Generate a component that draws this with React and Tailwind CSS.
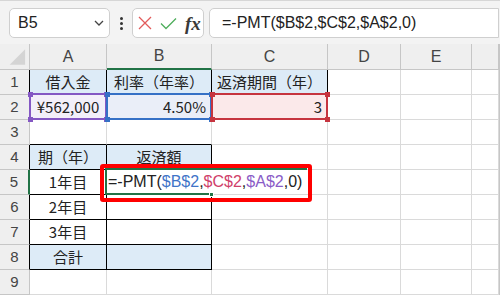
import React from "react";

const font = "font-['Noto_Sans_CJK_JP','Noto_Sans',sans-serif]";
const latin = "font-['Liberation_Sans','Noto_Sans_CJK_JP',sans-serif]";

const colHead = `flex items-center justify-center border-r border-b border-[#c6c6c6] bg-[#efefef] text-[16px] text-[#444] ${latin}`;
const rowHead = `flex items-center justify-center border-r border-b bg-[#efefef] border-b-[#c6c6c6] text-[15px] text-[#444] ${latin}`;
const cell = `relative flex items-center border-r border-b border-[#dadada] px-[5px] text-[15px] text-[#222] whitespace-nowrap ${font}`;

const RangeBox = ({ color, bg }) => (
  <>
    <div className={`absolute z-10 -left-[1px] -top-[2px] -right-[1px] -bottom-[1px] border-2 ${color}`} />
    <div className={`absolute z-10 -left-[2px] -top-[3px] w-[5px] h-[5px] ${bg}`} />
    <div className={`absolute z-10 -right-[3px] -top-[3px] w-[5px] h-[5px] ${bg}`} />
    <div className={`absolute z-10 -left-[2px] -bottom-[3px] w-[5px] h-[5px] ${bg}`} />
    <div className={`absolute z-10 -right-[3px] -bottom-[3px] w-[5px] h-[5px] ${bg}`} />
  </>
);

const Corner = () => (
  <svg width="30" height="26" viewBox="0 0 30 26">
    <polygon points="26,6 26,22 10,22" fill="#d4d4d4" />
  </svg>
);

export default function App() {
  return (
    <div className="w-[500px] h-[296px] overflow-hidden bg-white">
      {/* formula bar */}
      <div className="h-[44px] bg-[#f3f3f3] border-t border-[#d6d6d6] flex items-start pt-[7px] pl-[9px]">
        <div className="w-[101px] h-[30px] rounded-[5px] border border-[#cfcfcf] bg-white flex items-center justify-between pl-[8px] pr-[5px]">
          <span className={`text-[16px] text-[#222] ${latin}`}>B5</span>
          <svg width="10" height="6" viewBox="0 0 10 6">
            <path d="M1 1 L5 5 L9 1" fill="none" stroke="#444" strokeWidth="1.3" />
          </svg>
        </div>
        <div className="w-[22px] h-[30px] flex flex-col items-center justify-center gap-[2px]">
          <span className="w-[3px] h-[3px] bg-[#333] rounded-full" />
          <span className="w-[3px] h-[3px] bg-[#333] rounded-full" />
          <span className="w-[3px] h-[3px] bg-[#333] rounded-full" />
        </div>
        <div className="w-[72px] h-[30px] rounded-[5px] border border-[#cfcfcf] bg-white flex items-center pl-[5px] gap-[8px]">
          <svg width="14" height="14" viewBox="0 0 14 14">
            <path d="M1 1 L13 13 M13 1 L1 13" stroke="#e25b5b" strokeWidth="1.3" fill="none" />
          </svg>
          <svg width="17" height="13" viewBox="0 0 17 13">
            <path d="M1 6.5 L6 11.5 L16 1.5" stroke="#4fae5c" strokeWidth="1.3" fill="none" />
          </svg>
          <span className="font-['Liberation_Serif',serif] italic font-bold text-[19px] text-[#3a3a3a] leading-none">fx</span>
        </div>
        <div className={`ml-[5px] w-[290px] h-[30px] rounded-l-[5px] border border-[#cfcfcf] bg-white flex items-center pl-[12px] text-[16px] text-[#222] ${latin}`}>
          =-PMT($B$2,$C$2,$A$2,0)
        </div>
      </div>

      {/* sheet */}
      <div className="grid grid-cols-[30px_77px_105px_116px_73px_71px_27px] grid-rows-[26px_repeat(9,25px)] border-r border-[#c6c6c6]">
        {/* header row */}
        <div className="border-r border-b border-[#c6c6c6] bg-[#efefef] flex items-end">
          <Corner />
        </div>
        <div className={colHead}>A</div>
        <div className={`${colHead} bg-[#d3d3d3] border-b-2 border-b-[#217346] text-[#1e6b41]`}>B</div>
        <div className={colHead}>C</div>
        <div className={colHead}>D</div>
        <div className={colHead}>E</div>
        <div className={colHead}></div>

        {/* row 1 */}
        <div className={`${rowHead} border-r-black`}>1</div>
        <div className={`${cell} justify-center bg-[#ddebf7] border-r-black border-b-black`}>借入金</div>
        <div className={`${cell} justify-center bg-[#ddebf7] border-r-black border-b-black`}>利率（年率）</div>
        <div className={`${cell} justify-center bg-[#ddebf7] border-r-black border-b-black`}>返済期間（年）</div>
        <div className={cell}></div>
        <div className={cell}></div>
        <div className={cell}></div>

        {/* row 2 */}
        <div className={`${rowHead} border-r-black`}>2</div>
        <div className={`${cell} justify-center bg-[#f3eff9]`}>
          ¥562,000
          <RangeBox color="border-[#8457c3]" bg="bg-[#8457c3]" />
        </div>
        <div className={`${cell} justify-end bg-[#eaeef8]`}>
          4.50%
          <RangeBox color="border-[#3570c6]" bg="bg-[#3570c6]" />
        </div>
        <div className={`${cell} justify-end bg-[#fbe9ea]`}>
          3
          <RangeBox color="border-[#c6343f]" bg="bg-[#c6343f]" />
        </div>
        <div className={cell}></div>
        <div className={cell}></div>
        <div className={cell}></div>

        {/* row 3 */}
        <div className={`${rowHead} border-r-[#c6c6c6]`}>3</div>
        <div className={`${cell} border-b-black`}></div>
        <div className={`${cell} border-b-black`}></div>
        <div className={cell}></div>
        <div className={cell}></div>
        <div className={cell}></div>
        <div className={cell}></div>

        {/* row 4 */}
        <div className={`${rowHead} border-r-black`}>4</div>
        <div className={`${cell} justify-center bg-[#ddebf7] border-r-black border-b-black`}>期（年）</div>
        <div className={`${cell} justify-center bg-[#ddebf7] border-r-black border-b-black`}>返済額</div>
        <div className={cell}></div>
        <div className={cell}></div>
        <div className={cell}></div>
        <div className={cell}></div>

        {/* row 5 */}
        <div className={`${rowHead} bg-[#d3d3d3] border-r-2 border-r-[#217346]`}>5</div>
        <div className={`${cell} justify-center border-r-black border-b-black`}>1年目</div>
        <div className={`${cell} border-r-black border-b-black`}>
          <div className={`absolute z-20 -left-[2px] -top-[2px] w-[202px] h-[26px] bg-white border-t-2 border-l-2 border-[#217346] flex items-center pl-[1px] text-[16px] text-[#222] ${latin}`}>
            =-PMT(<span className="text-[#3f74c8]">$B$2</span>,<span className="text-[#d0406a]">$C$2</span>,<span className="text-[#8a5cc7]">$A$2</span>,0)
          </div>
          <div className="absolute z-20 -left-[2px] -bottom-[1px] w-[107px] h-[2px] bg-[#217346]" />
          <div className="absolute z-20 -right-[3px] -bottom-[3px] w-[5px] h-[5px] bg-[#217346] border border-white" />
          <div className="absolute z-30 -left-[7px] -top-[6px] w-[212px] h-[38px] border-[4px] border-[#ff0000] rounded-[3px]" />
        </div>
        <div className={cell}></div>
        <div className={cell}></div>
        <div className={cell}></div>
        <div className={cell}></div>

        {/* row 6 */}
        <div className={`${rowHead} border-r-black`}>6</div>
        <div className={`${cell} justify-center border-r-black border-b-black`}>2年目</div>
        <div className={`${cell} border-r-black border-b-black`}></div>
        <div className={cell}></div>
        <div className={cell}></div>
        <div className={cell}></div>
        <div className={cell}></div>

        {/* row 7 */}
        <div className={`${rowHead} border-r-black`}>7</div>
        <div className={`${cell} justify-center border-r-black border-b-black`}>3年目</div>
        <div className={`${cell} border-r-black border-b-black`}></div>
        <div className={cell}></div>
        <div className={cell}></div>
        <div className={cell}></div>
        <div className={cell}></div>

        {/* row 8 */}
        <div className={`${rowHead} border-r-black`}>8</div>
        <div className={`${cell} justify-center bg-[#ddebf7] border-r-black border-b-black`}>合計</div>
        <div className={`${cell} bg-[#ddebf7] border-r-black border-b-black`}></div>
        <div className={cell}></div>
        <div className={cell}></div>
        <div className={cell}></div>
        <div className={cell}></div>

        {/* row 9 */}
        <div className={`${rowHead} border-r-[#c6c6c6]`}>9</div>
        <div className={cell}></div>
        <div className={cell}></div>
        <div className={cell}></div>
        <div className={cell}></div>
        <div className={cell}></div>
        <div className={cell}></div>
      </div>
    </div>
  );
}
